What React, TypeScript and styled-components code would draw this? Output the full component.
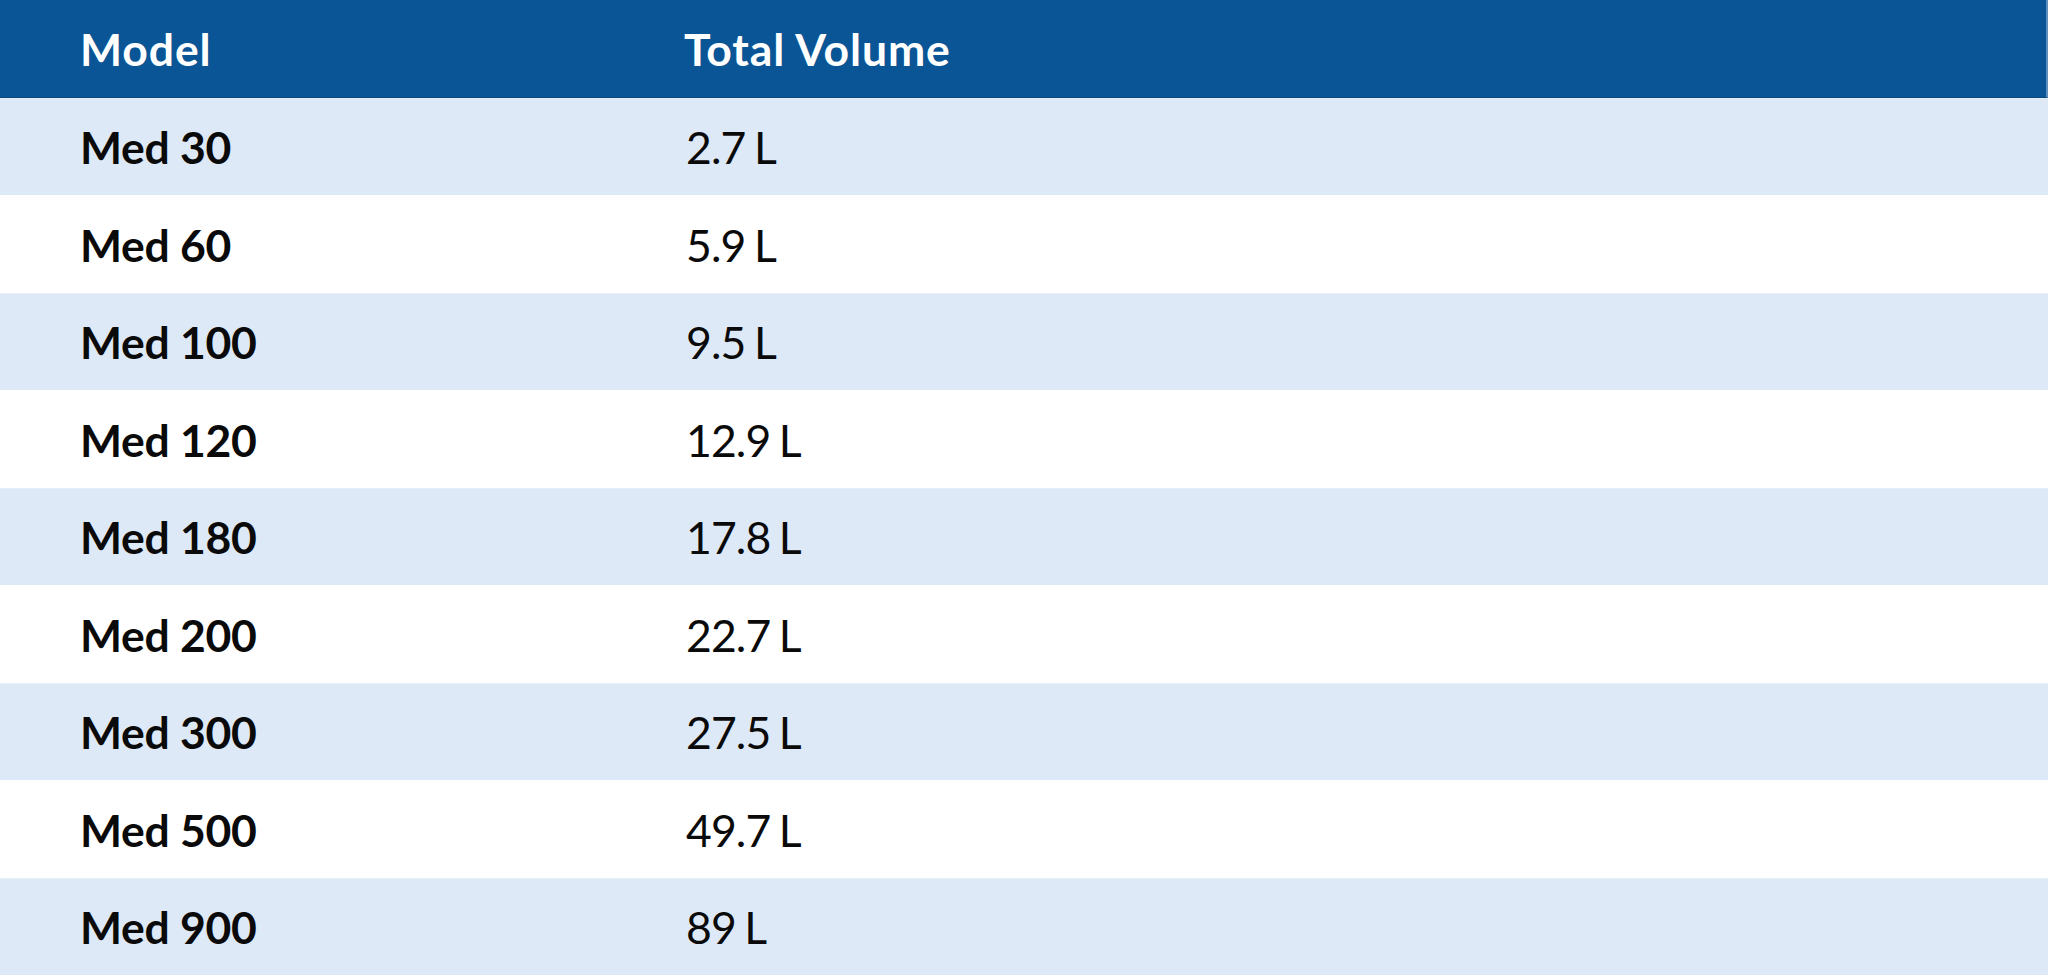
import * as React from "react";
import styled, { createGlobalStyle } from "styled-components";

const GlobalStyle = createGlobalStyle`
    html, body {
        margin: 0;
        padding: 0;
        background: #ffffff;
    }
    body {
        font-family: "Lato", "Open Sans", sans-serif;
    }
`;

const models = [
    { name: "Med 30", volume: "2.7 L" },
    { name: "Med 60", volume: "5.9 L" },
    { name: "Med 100", volume: "9.5 L" },
    { name: "Med 120", volume: "12.9 L" },
    { name: "Med 180", volume: "17.8 L" },
    { name: "Med 200", volume: "22.7 L" },
    { name: "Med 300", volume: "27.5 L" },
    { name: "Med 500", volume: "49.7 L" },
    { name: "Med 900", volume: "89 L" },
];

export default function App() {
    return <>
        <GlobalStyle />
        <Table>
            <HeaderRow>
                <HeaderCell>Model</HeaderCell>
                <HeaderCell>Total Volume</HeaderCell>
            </HeaderRow>
            {models.map((m, i) =>
                <Row key={m.name} $shaded={i % 2 === 0}>
                    <ModelCell>{m.name}</ModelCell>
                    <VolumeCell>{m.volume}</VolumeCell>
                </Row>
            )}
        </Table>
    </>;
}

const Table = styled.div`
    display: grid;
    grid-template-rows: repeat(10, 97.5px);
    width: 2048px;
    height: 975px;
    overflow: hidden;
`;

const RowBase = styled.div`
    display: grid;
    grid-template-columns: 604px 1fr;
    align-items: center;
    padding-left: 80px;
    box-sizing: border-box;
`;

const HeaderRow = styled(RowBase)`
    background: #0a5595;
    border-right: 2px solid #5f8fbd;
    border-bottom: 1px solid #06487f;
`;

const Row = styled(RowBase) <{ $shaded: boolean }>`
    background: ${p => p.$shaded ? "#dee9f7" : "#ffffff"};
    border-top: 1px solid ${p => p.$shaded ? "#e6eef9" : "#ffffff"};
`;

const HeaderCell = styled.div`
    font-family: "Lato", "Open Sans", sans-serif;
    font-weight: 700;
    font-size: 44.5px;
    line-height: 1.2;
    letter-spacing: 0.9px;
    color: #ffffff;
    padding-top: 1px;
`;

const ModelCell = styled.div`
    font-family: "Lato", "Open Sans", sans-serif;
    font-weight: 700;
    font-size: 44.5px;
    line-height: 1.2;
    letter-spacing: -0.3px;
    color: #0a0a0a;
`;

const VolumeCell = styled(ModelCell)`
    font-weight: 400;
    letter-spacing: -0.9px;
    word-spacing: -2px;
    padding-left: 2px;
`;
